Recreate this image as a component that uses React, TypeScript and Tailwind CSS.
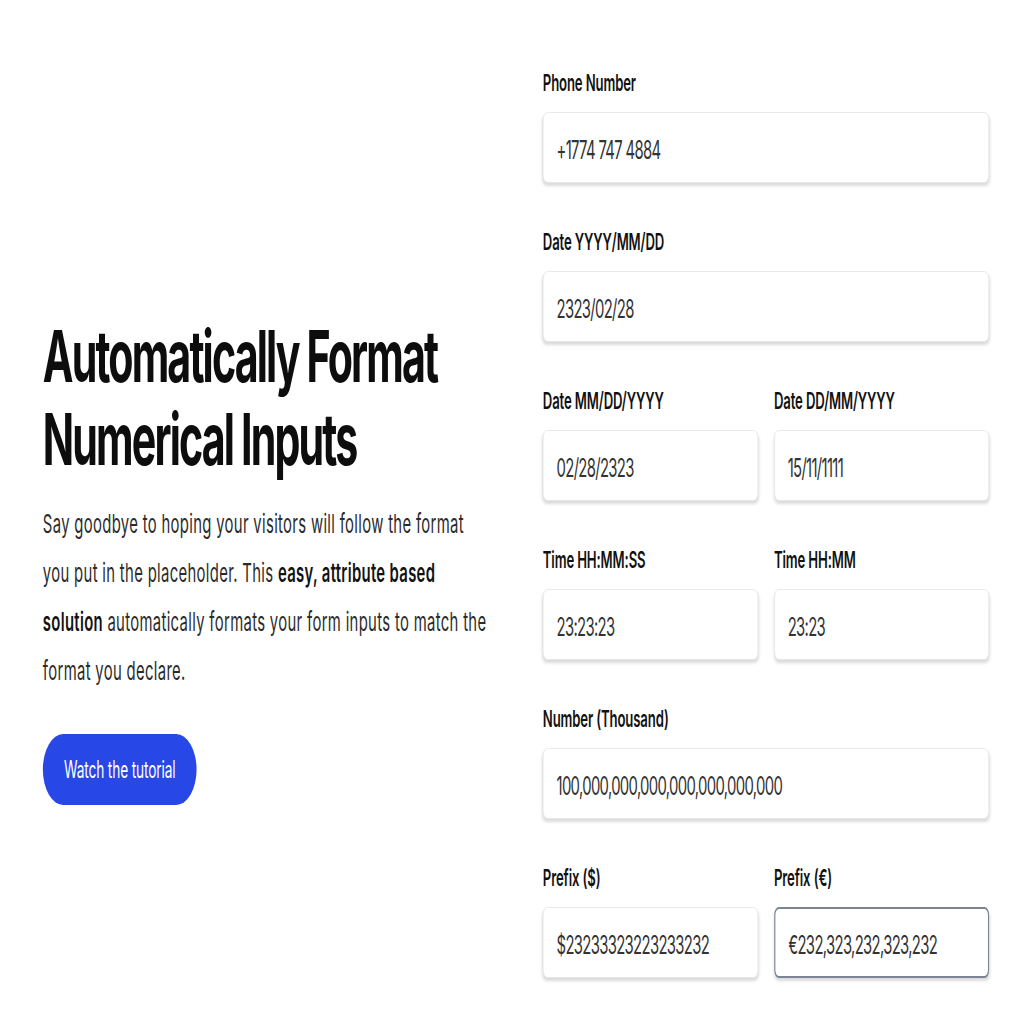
import clsx from "clsx";

// the reference is squashed sideways, so the page is laid out 1792px wide and scaled to 1024
const fields: { label: string; value: string; focused?: boolean }[][] = [
  [{ label: "Phone Number", value: "+1774 747 4884" }],
  [{ label: "Date YYYY/MM/DD", value: "2323/02/28" }],
  [
    { label: "Date MM/DD/YYYY", value: "02/28/2323" },
    { label: "Date DD/MM/YYYY", value: "15/11/1111" },
  ],
  [
    { label: "Time HH:MM:SS", value: "23:23:23" },
    { label: "Time HH:MM", value: "23:23" },
  ],
  [{ label: "Number (Thousand)", value: "100,000,000,000,000,000,000,000" }],
  [
    { label: "Prefix ($)", value: "$23233323223233232" },
    { label: "Prefix (€)", value: "€232,323,232,323,232", focused: true },
  ],
];

function Field({ label, value, focused }: { label: string; value: string; focused?: boolean }) {
  return (
    <div className="flex flex-1 flex-col">
      <label className="h-[28px] text-[23px] leading-[28px] font-semibold tracking-[-0.01em] text-[#111]">
        {label}
      </label>
      <input
        readOnly
        value={value}
        className={clsx(
          "mt-[15px] h-[71px] w-full rounded-[8px] bg-white px-[23px] pt-[3px] text-[26px] tracking-[-0.045em] text-[#333] outline-none shadow-[0_3px_4px_rgba(0,0,0,0.14)]",
          focused ? "border-2 border-[#7d8595]" : "border border-[#e4e4e4]"
        )}
      />
    </div>
  );
}

export default function App() {
  return (
    <div className="h-[1024px] w-[1024px] overflow-hidden bg-white font-['Inter',sans-serif]">
      <div className="flex h-[1024px] w-[1792px] origin-top-left scale-x-[0.5714]">
        <div className="flex w-[875px] flex-col pl-[75px] pt-[314px]">
          <h1 className="text-[72px] leading-[83px] font-bold tracking-[-0.045em] text-[#0d0d0d]">
            Automatically Format
            <br />
            Numerical Inputs
          </h1>
          <p className="mt-[19px] text-[26px] leading-[49px] tracking-[0.022em] text-[#2b2b2b]">
            Say goodbye to hoping your visitors will follow the format
            <br />
            you put in the placeholder. This <b className="font-semibold text-[#111]">easy, attribute based</b>
            <br />
            <b className="font-semibold text-[#111]">solution</b> automatically formats your form inputs to match the
            <br />
            format you declare.
          </p>
          <div className="mt-[39px]">
            <button className="h-[71px] rounded-full bg-[#2747e6] px-[37px] text-[24px] tracking-[-0.01em] text-white">
              Watch the tutorial
            </button>
          </div>
        </div>
        <div className="ml-[75px] flex w-[781px] flex-col gap-[45px] pt-[69px]">
          {fields.map((row, i) => (
            <div key={i} className="flex gap-[28px]">
              {row.map((f) => (
                <Field key={f.label} {...f} />
              ))}
            </div>
          ))}
        </div>
      </div>
    </div>
  );
}
